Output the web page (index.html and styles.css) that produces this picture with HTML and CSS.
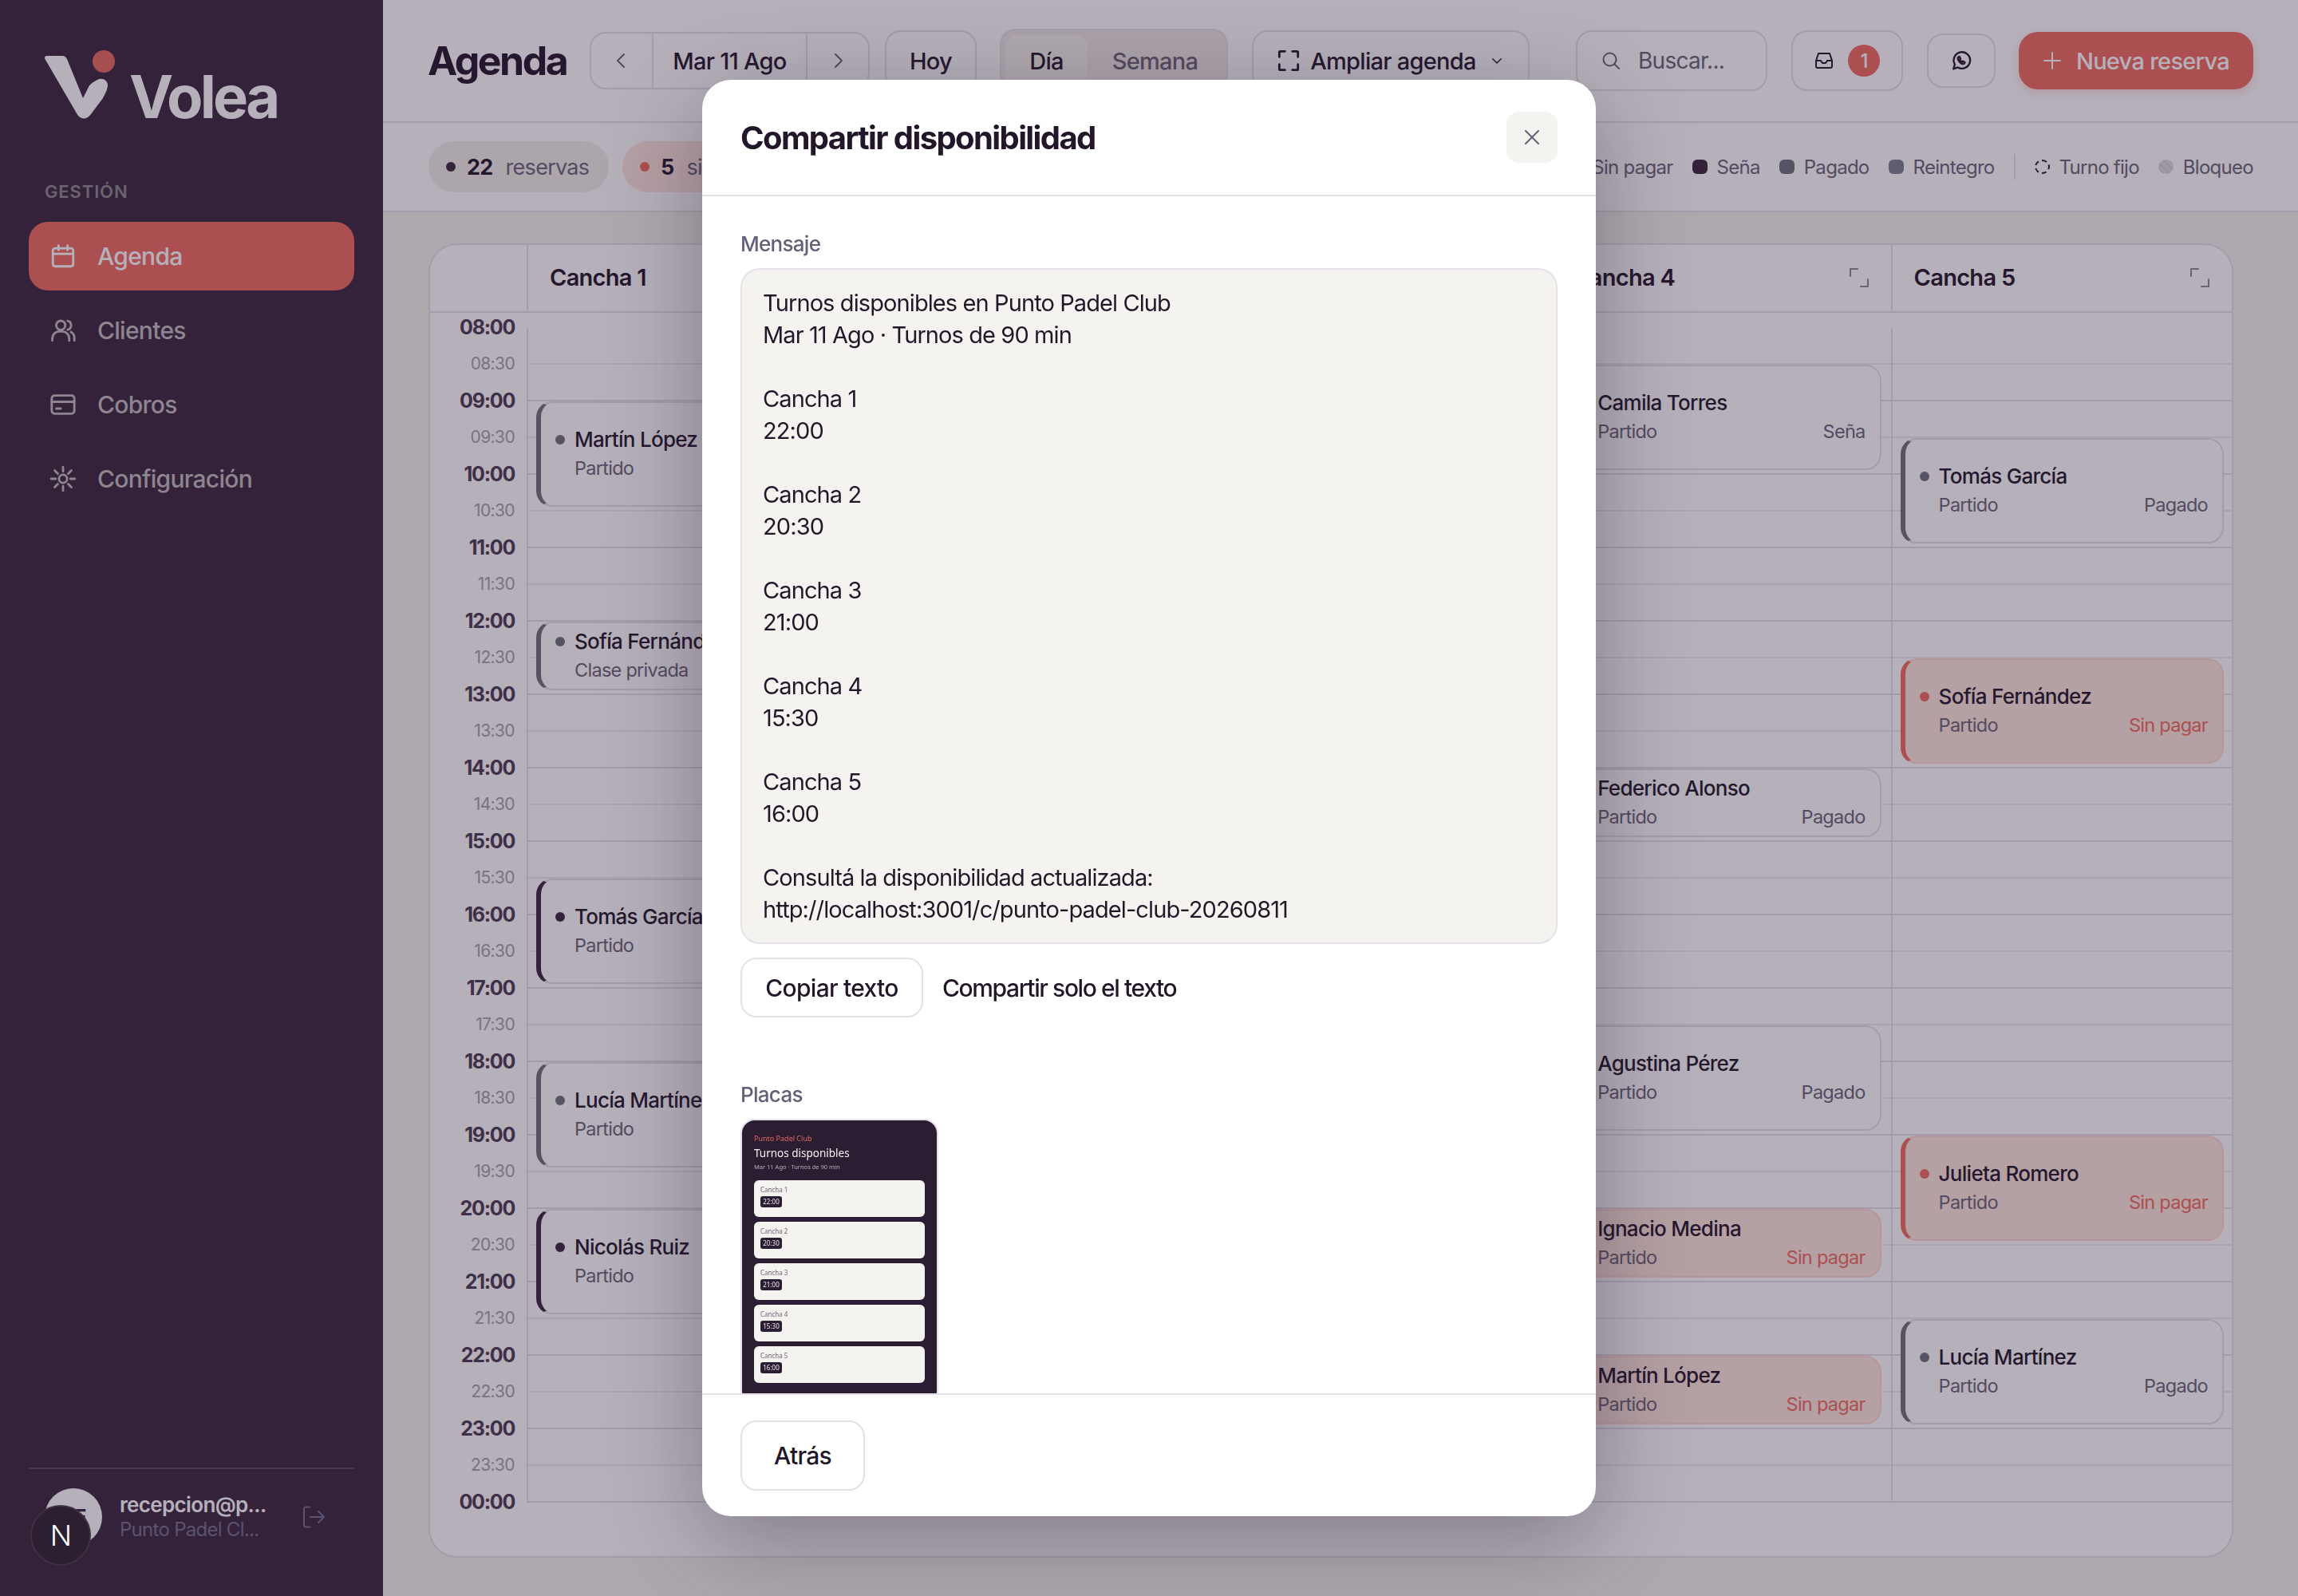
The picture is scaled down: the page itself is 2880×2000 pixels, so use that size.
FILE: index.html
```html
<!DOCTYPE html>
<html lang="es">

<head>
    <meta charset="UTF-8">
    <meta name="viewport" content="width=device-width, initial-scale=1.0">
    <title>Volea - Agenda</title>
    <link rel="stylesheet" href="styles.css">
</head>

<body>
    <div class="app">
        <aside class="sidebar">
            <div class="logo">
                <svg class="logo-mark" width="90" height="90" viewBox="0 0 90 90">
                    <path d="M3 12 C1 9 2 7 6 7 L24 7 C27 7 29 9 30 11 L50 60 L57 46 C60 41 63 40 68 37 C74 34 80 37 81 43 C81 49 78 54 75 60 L60 80 C54 88 46 87 42 79 Z" fill="#ffffff"/>
                    <circle cx="76" cy="14" r="14" fill="#ea6a5c"/>
                </svg>
                <span class="logo-text">Volea</span>
            </div>

            <div class="nav-title">GESTIÓN</div>
            <nav class="nav">
                <a class="nav-item active">
                    <svg class="icon" viewBox="0 0 24 24"><rect x="3" y="5" width="18" height="16" rx="2"/><path d="M8 2.5v4M16 2.5v4M3 10h18"/></svg>
                    Agenda
                </a>
                <a class="nav-item">
                    <svg class="icon" viewBox="0 0 24 24"><circle cx="10" cy="7.5" r="4"/><path d="M2.5 21v-2a6 6 0 0 1 6-6h3a6 6 0 0 1 6 6v2M16 3.6a4 4 0 0 1 0 7.8M19 13.4a6 6 0 0 1 3 5.6v2"/></svg>
                    Clientes
                </a>
                <a class="nav-item">
                    <svg class="icon" viewBox="0 0 24 24"><rect x="2" y="4" width="20" height="16" rx="2.5"/><path d="M2 9.5h20M6 15.5h4"/></svg>
                    Cobros
                </a>
                <a class="nav-item">
                    <svg class="icon" viewBox="0 0 24 24"><circle cx="12" cy="12" r="3.6"/><path d="M12 1.5v4M12 18.5v4M1.5 12h4M18.5 12h4M4.6 4.6l2.8 2.8M16.6 16.6l2.8 2.8M4.6 19.4l2.8-2.8M16.6 7.4l2.8-2.8"/></svg>
                    Configuración
                </a>
            </nav>

            <div class="user">
                <div class="avatar">RE</div>
                <div class="user-info">
                    <div class="user-mail">recepcion@p...</div>
                    <div class="user-club">Punto Padel Cl...</div>
                </div>
                <svg class="logout" viewBox="0 0 28 28"><path d="M9 1.5H4.5A2.5 2.5 0 0 0 2 4v20a2.5 2.5 0 0 0 2.5 2.5H9M10 14h17M20 7l7 7-7 7"/></svg>
            </div>
        </aside>

        <main class="main">
            <header class="topbar">
                <h1>Agenda</h1>
                <div class="date-nav">
                    <button class="date-arrow"><svg class="icon-sm" viewBox="0 0 24 24"><path d="M15 4l-8 8 8 8"/></svg></button>
                    <span class="date-label">Mar 11 Ago</span>
                    <button class="date-arrow"><svg class="icon-sm" viewBox="0 0 24 24"><path d="M9 4l8 8-8 8"/></svg></button>
                </div>
                <button class="btn today">Hoy</button>
                <div class="view-switch">
                    <span class="view-tab active">Día</span>
                    <span class="view-tab">Semana</span>
                </div>
                <button class="btn expand">
                    <svg class="expand-icon" viewBox="0 0 24 24"><path d="M8 2H3a1 1 0 0 0-1 1v5M16 2h5a1 1 0 0 1 1 1v5M8 22H3a1 1 0 0 1-1-1v-5M16 22h5a1 1 0 0 0 1-1v-5"/></svg>
                    Ampliar agenda
                    <svg class="chevron" viewBox="0 0 24 24"><path d="M5 9l7 7 7-7"/></svg>
                </button>
                <div class="search">
                    <svg class="icon-sm" viewBox="0 0 24 24"><circle cx="10.5" cy="10.5" r="8"/><path d="M16.5 16.5L22 22"/></svg>
                    Buscar...
                </div>
                <button class="btn inbox">
                    <svg class="icon-sm" viewBox="0 0 24 24"><path d="M5 3h14l3 9v7a2 2 0 0 1-2 2H4a2 2 0 0 1-2-2v-7zM2 12h6l2 3h4l2-3h6"/></svg>
                    <span class="badge">1</span>
                </button>
                <button class="btn whatsapp">
                    <svg class="wa-icon" viewBox="0 0 24 24"><path d="M3 21.5l1.5-5.2A9.5 9.5 0 1 1 8 19.8z"/><path d="M9 7.5c-1.5 1-1.3 3 .5 5.3 2 2.4 4.3 3.5 5.8 2.6l.9-1.4-2.4-1.4-1 .8c-1-.4-2-1.5-2.5-2.5l.8-1-1.2-2.5z"/></svg>
                </button>
                <button class="btn-primary">
                    <svg class="icon-sm" viewBox="0 0 24 24"><path d="M12 2v20M2 12h20"/></svg>
                    Nueva reserva
                </button>
            </header>

            <div class="filters">
                <div class="chip"><span class="dot dark"></span><b>22</b> reservas</div>
                <div class="chip chip-red"><span class="dot red"></span><b>5</b> sin pagar</div>
                <div class="legend">
                    <span class="legend-item"><span class="swatch red"></span>Sin pagar</span>
                    <span class="legend-item"><span class="swatch dark"></span>Seña</span>
                    <span class="legend-item"><span class="swatch grey"></span>Pagado</span>
                    <span class="legend-item"><span class="swatch slate"></span>Reintegro</span>
                    <span class="legend-sep"></span>
                    <span class="legend-item"><span class="swatch dashed"></span>Turno fijo</span>
                    <span class="legend-item"><span class="swatch blocked"></span>Bloqueo</span>
                </div>
            </div>

            <div class="content">
                <section class="agenda">
                    <div class="agenda-head">
                        <div class="head-time"></div>
                        <div class="head-court">Cancha 1 <svg class="court-expand" viewBox="0 0 24 24"><path d="M1 10V1h9M23 14v9h-9"/></svg></div>
                        <div class="head-court">Cancha 2 <svg class="court-expand" viewBox="0 0 24 24"><path d="M1 10V1h9M23 14v9h-9"/></svg></div>
                        <div class="head-court">Cancha 3 <svg class="court-expand" viewBox="0 0 24 24"><path d="M1 10V1h9M23 14v9h-9"/></svg></div>
                        <div class="head-court">Cancha 4 <svg class="court-expand" viewBox="0 0 24 24"><path d="M1 10V1h9M23 14v9h-9"/></svg></div>
                        <div class="head-court">Cancha 5 <svg class="court-expand" viewBox="0 0 24 24"><path d="M1 10V1h9M23 14v9h-9"/></svg></div>
                    </div>
                    <div class="agenda-body">
                        <div class="times">
                            <span class="hour">08:00</span><span>08:30</span>
                            <span class="hour">09:00</span><span>09:30</span>
                            <span class="hour">10:00</span><span>10:30</span>
                            <span class="hour">11:00</span><span>11:30</span>
                            <span class="hour">12:00</span><span>12:30</span>
                            <span class="hour">13:00</span><span>13:30</span>
                            <span class="hour">14:00</span><span>14:30</span>
                            <span class="hour">15:00</span><span>15:30</span>
                            <span class="hour">16:00</span><span>16:30</span>
                            <span class="hour">17:00</span><span>17:30</span>
                            <span class="hour">18:00</span><span>18:30</span>
                            <span class="hour">19:00</span><span>19:30</span>
                            <span class="hour">20:00</span><span>20:30</span>
                            <span class="hour">21:00</span><span>21:30</span>
                            <span class="hour">22:00</span><span>22:30</span>
                            <span class="hour">23:00</span><span>23:30</span>
                            <span class="hour">00:00</span>
                        </div>

                        <!-- grid-row: each row is half an hour from 08:00 -->
                        <div class="court">
                            <div class="event paid" style="grid-row: 3 / span 3">
                                <div class="event-name"><span class="dot"></span>Martín López</div>
                                <div class="event-meta"><span>Partido</span></div>
                            </div>
                            <div class="event paid" style="grid-row: 9 / span 2">
                                <div class="event-name"><span class="dot"></span>Sofía Fernández</div>
                                <div class="event-meta"><span>Clase privada</span></div>
                            </div>
                            <div class="event deposit" style="grid-row: 16 / span 3">
                                <div class="event-name"><span class="dot"></span>Tomás García</div>
                                <div class="event-meta"><span>Partido</span></div>
                            </div>
                            <div class="event paid" style="grid-row: 21 / span 3">
                                <div class="event-name"><span class="dot"></span>Lucía Martínez</div>
                                <div class="event-meta"><span>Partido</span></div>
                            </div>
                            <div class="event deposit" style="grid-row: 25 / span 3">
                                <div class="event-name"><span class="dot"></span>Nicolás Ruiz</div>
                                <div class="event-meta"><span>Partido</span></div>
                            </div>
                        </div>
                        <div class="court"></div>
                        <div class="court"></div>
                        <div class="court">
                            <div class="event deposit" style="grid-row: 2 / span 3">
                                <div class="event-name"><span class="dot"></span>Camila Torres</div>
                                <div class="event-meta"><span>Partido</span><span class="event-status">Seña</span></div>
                            </div>
                            <div class="event paid" style="grid-row: 13 / span 2">
                                <div class="event-name"><span class="dot"></span>Federico Alonso</div>
                                <div class="event-meta"><span>Partido</span><span class="event-status">Pagado</span></div>
                            </div>
                            <div class="event paid" style="grid-row: 20 / span 3">
                                <div class="event-name"><span class="dot"></span>Agustina Pérez</div>
                                <div class="event-meta"><span>Partido</span><span class="event-status">Pagado</span></div>
                            </div>
                            <div class="event unpaid" style="grid-row: 25 / span 2">
                                <div class="event-name"><span class="dot"></span>Ignacio Medina</div>
                                <div class="event-meta"><span>Partido</span><span class="event-status">Sin pagar</span></div>
                            </div>
                            <div class="event unpaid" style="grid-row: 29 / span 2">
                                <div class="event-name"><span class="dot"></span>Martín López</div>
                                <div class="event-meta"><span>Partido</span><span class="event-status">Sin pagar</span></div>
                            </div>
                        </div>
                        <div class="court">
                            <div class="event paid" style="grid-row: 4 / span 3">
                                <div class="event-name"><span class="dot"></span>Tomás García</div>
                                <div class="event-meta"><span>Partido</span><span class="event-status">Pagado</span></div>
                            </div>
                            <div class="event unpaid" style="grid-row: 10 / span 3">
                                <div class="event-name"><span class="dot"></span>Sofía Fernández</div>
                                <div class="event-meta"><span>Partido</span><span class="event-status">Sin pagar</span></div>
                            </div>
                            <div class="event unpaid" style="grid-row: 23 / span 3">
                                <div class="event-name"><span class="dot"></span>Julieta Romero</div>
                                <div class="event-meta"><span>Partido</span><span class="event-status">Sin pagar</span></div>
                            </div>
                            <div class="event paid" style="grid-row: 28 / span 3">
                                <div class="event-name"><span class="dot"></span>Lucía Martínez</div>
                                <div class="event-meta"><span>Partido</span><span class="event-status">Pagado</span></div>
                            </div>
                        </div>
                    </div>
                </section>
            </div>
        </main>
    </div>

    <div class="overlay">
        <div class="modal">
            <div class="modal-head">
                <h2>Compartir disponibilidad</h2>
                <button class="modal-close"><svg class="icon-sm" viewBox="0 0 24 24"><path d="M4 4l16 16M20 4L4 20"/></svg></button>
            </div>
            <div class="modal-body">
                <div class="field-label">Mensaje</div>
                <div class="message">Turnos disponibles en Punto Padel Club
Mar 11 Ago · Turnos de 90 min

Cancha 1
22:00

Cancha 2
20:30

Cancha 3
21:00

Cancha 4
15:30

Cancha 5
16:00

Consultá la disponibilidad actualizada:
http://localhost:3001/c/punto-padel-club-20260811</div>
                <div class="message-actions">
                    <button class="btn-outline">Copiar texto</button>
                    <button class="btn-text">Compartir solo el texto</button>
                </div>

                <div class="field-label plates-label">Placas</div>
                <div class="plate">
                    <div class="plate-club">Punto Padel Club</div>
                    <div class="plate-title">Turnos disponibles</div>
                    <div class="plate-sub">Mar 11 Ago · Turnos de 90 min</div>
                    <div class="plate-card"><div>Cancha 1</div><span class="plate-time">22:00</span></div>
                    <div class="plate-card"><div>Cancha 2</div><span class="plate-time">20:30</span></div>
                    <div class="plate-card"><div>Cancha 3</div><span class="plate-time">21:00</span></div>
                    <div class="plate-card"><div>Cancha 4</div><span class="plate-time">15:30</span></div>
                    <div class="plate-card"><div>Cancha 5</div><span class="plate-time">16:00</span></div>
                </div>
            </div>
            <div class="modal-foot">
                <button class="btn-outline back">Atrás</button>
            </div>
        </div>
    </div>

    <div class="dev-badge">N</div>
</body>

</html>
```

FILE: styles.css
```css
* {
    box-sizing: border-box;
}

body {
    margin: 0;
    font-family: Inter, "Noto Sans", sans-serif;
    color: #231629;
    background-color: #f6f4ee;
    letter-spacing: -0.045em;
}

button {
    font: inherit;
    letter-spacing: inherit;
    color: inherit;
    background: none;
    border: none;
    padding: 0;
}

svg {
    flex: none;
    fill: none;
    stroke: currentColor;
    stroke-width: 2;
    stroke-linecap: round;
    stroke-linejoin: round;
}

.app {
    display: flex;
    height: 2000px;
    overflow: hidden;
}

/* Sidebar */
.sidebar {
    width: 480px;
    flex: none;
    display: flex;
    flex-direction: column;
    background-color: #3a263c;
    padding: 0 36px;
}

.logo {
    display: flex;
    align-items: flex-end;
    height: 155px;
    padding-left: 18px;
    gap: 24px;
}

.logo-mark {
    stroke: none;
    margin-top: auto;
    margin-bottom: 2px;
}

.logo-text {
    font-size: 74px;
    line-height: 72px;
    font-weight: 700;
    color: #fff;
    letter-spacing: -0.05em;
    margin: 0 0 -2px -6px;
}

.nav-title {
    margin-top: 72px;
    padding-left: 20px;
    font-size: 22px;
    line-height: 26px;
    font-weight: 600;
    letter-spacing: 0.04em;
    color: #8d8a8e;
}

.nav {
    display: flex;
    flex-direction: column;
    gap: 7px;
    margin-top: 25px;
}

.nav-item {
    display: flex;
    align-items: center;
    gap: 26px;
    height: 86px;
    padding-left: 26px;
    border-radius: 24px;
    font-size: 30px;
    font-weight: 500;
    color: #c2bebf;
}

.nav-item.active {
    background-color: #f26a5c;
    color: #fff;
}

.icon {
    width: 34px;
    height: 34px;
}

.user {
    display: flex;
    align-items: center;
    margin-top: auto;
    height: 161px;
    padding: 0 37px 40px 20px;
    border-top: 2px solid #5a4550;
}

.avatar {
    width: 72px;
    height: 72px;
    flex: none;
    display: flex;
    align-items: center;
    justify-content: center;
    border-radius: 50%;
    background-color: #fff;
    color: #3a263c;
    font-size: 26px;
    font-weight: 700;
}

.user-info {
    flex: 1;
    margin-left: 22px;
}

.user-mail {
    font-size: 26px;
    line-height: 32px;
    font-weight: 600;
    letter-spacing: -0.025em;
    color: #fff;
}

.user-club {
    font-size: 24px;
    line-height: 30px;
    color: #73708f;
}

.logout {
    width: 28px;
    height: 28px;
    color: #73708f;
}

/* Top bar */
.main {
    flex: 1;
    display: flex;
    flex-direction: column;
    min-width: 0;
}

.topbar {
    display: flex;
    align-items: center;
    height: 154px;
    padding: 0 56px 0 57px;
    border-bottom: 2px solid #e5e1e6;
    background-color: #fff;
}

.topbar h1 {
    margin: 0 30px 0 -1px;
    font-size: 50px;
    font-weight: 700;
    letter-spacing: -0.05em;
    width: 173px;
    white-space: nowrap;
}

.date-nav {
    display: flex;
    align-items: center;
    width: 351px;
    height: 72px;
    border: 2px solid #e5e1e6;
    border-radius: 20px;
    margin-right: 19px;
}

.date-arrow {
    width: 76px;
    height: 100%;
    display: flex;
    align-items: center;
    justify-content: center;
    color: #6b6475;
}

.date-label {
    flex: 1;
    height: 100%;
    display: flex;
    align-items: center;
    justify-content: center;
    border-left: 2px solid #e5e1e6;
    border-right: 2px solid #e5e1e6;
    font-size: 29px;
    font-weight: 500;
}

.icon-sm {
    width: 24px;
    height: 24px;
}

.btn {
    display: flex;
    align-items: center;
    justify-content: center;
    height: 76px;
    border: 2px solid #e5e1e6;
    border-radius: 20px;
    font-size: 29px;
    font-weight: 500;
}

.today {
    width: 115px;
    margin-right: 29px;
}

.view-switch {
    display: flex;
    width: 286px;
    height: 80px;
    padding: 6px 5px;
    border: 2px solid #e5e1e6;
    border-radius: 20px;
    background-color: #f0e9e6;
    margin-right: 30px;
}

.view-tab {
    flex: 1;
    display: flex;
    align-items: center;
    justify-content: center;
    border-radius: 16px;
    font-size: 29px;
    font-weight: 500;
    color: #6b6475;
}

.view-tab.active {
    flex: none;
    width: 103px;
    background-color: #f6f4ee;
    color: #231629;
}

.expand {
    width: 348px;
    gap: 13px;
}

.expand-icon {
    width: 28px;
    height: 28px;
    stroke-width: 2.4;
}

.chevron {
    width: 18px;
    height: 18px;
    margin-left: 4px;
}

.search {
    display: flex;
    align-items: center;
    gap: 22px;
    width: 240px;
    height: 76px;
    padding-left: 30px;
    margin-left: auto;
    border: 2px solid #e5e1e6;
    border-radius: 20px;
    font-size: 28px;
    color: #6b6475;
}

.inbox {
    width: 140px;
    margin-left: 30px;
    gap: 18px;
}

.badge {
    width: 40px;
    height: 40px;
    display: flex;
    align-items: center;
    justify-content: center;
    border-radius: 50%;
    background-color: #f26a5c;
    color: #fff;
    font-size: 24px;
    font-weight: 500;
}

.whatsapp {
    width: 86px;
    height: 68px;
    margin-left: 30px;
}

.wa-icon {
    width: 26px;
    height: 26px;
    stroke-width: 2.2;
}

.btn-primary {
    display: flex;
    align-items: center;
    justify-content: center;
    gap: 18px;
    width: 294px;
    height: 72px;
    margin-left: 29px;
    border-radius: 24px;
    background-color: #f26a5c;
    color: #fff;
    font-size: 29px;
    font-weight: 500;
    box-shadow: 0 4px 12px rgba(242, 106, 92, 0.25);
}

/* Filters */
.filters {
    display: flex;
    align-items: center;
    gap: 17px;
    height: 112px;
    padding: 0 56px 0 57px;
    border-bottom: 2px solid #e5e1e6;
    background-color: #fff;
}

.chip {
    display: flex;
    align-items: center;
    gap: 14px;
    width: 226px;
    height: 64px;
    padding-left: 22px;
    border-radius: 32px;
    background-color: #f1efe9;
    font-size: 27px;
    color: #6b6475;
}

.chip b {
    font-weight: 700;
    color: #231629;
    margin-right: 2px;
}

.chip-red {
    width: 240px;
    background-color: #ffe6de;
}

.dot {
    width: 12px;
    height: 12px;
    flex: none;
    border-radius: 50%;
}

.dot.dark {
    background-color: #3a263c;
}

.dot.red {
    background-color: #f26a5c;
}

.legend {
    display: flex;
    align-items: center;
    gap: 24px;
    margin-left: auto;
    font-size: 24px;
    color: #6b6475;
}

.legend-item {
    display: flex;
    align-items: center;
    gap: 12px;
}

.swatch {
    width: 19px;
    height: 18px;
    border-radius: 6px;
}

.swatch.red {
    background-color: #f26a5c;
}

.swatch.dark {
    background-color: #3a263c;
}

.swatch.grey {
    background-color: #6d7278;
}

.swatch.slate {
    background-color: #7d7f90;
}

.swatch.dashed {
    border: 2px dashed #231629;
    border-radius: 50%;
}

.swatch.blocked {
    background: repeating-linear-gradient(45deg, #e2dfe2 0 3px, #d4d1d5 3px 6px);
    border-radius: 50%;
}

.legend-sep {
    width: 2px;
    height: 32px;
    background-color: #e5e1e6;
}

/* Agenda grid */
.content {
    flex: 1;
    display: flex;
    padding: 39px 81px 48px 57px;
}

.agenda {
    flex: 1;
    display: flex;
    flex-direction: column;
    background-color: #fff;
    border: 2px solid #e5e1e6;
    border-radius: 36px;
}

.agenda-head,
.agenda-body {
    display: grid;
    grid-template-columns: 121px repeat(5, 1fr);
}

.agenda-head {
    height: 85px;
    border-bottom: 2px solid #e5e1e6;
}

.agenda-body {
    align-items: start;
    padding-top: 19px;
}

.head-court {
    display: flex;
    align-items: center;
    justify-content: space-between;
    padding: 0 28px 2px 27px;
    border-left: 2px solid #e5e1e6;
    font-size: 29px;
    font-weight: 600;
}

.court-expand {
    width: 24px;
    height: 24px;
    color: #8d8a8e;
}

.times {
    display: flex;
    flex-direction: column;
    margin-top: -24px;
    padding-right: 15px;
    text-align: right;
    font-size: 21px;
    letter-spacing: -0.03em;
    color: #a6a1a8;
}

.times span {
    height: 46px;
    line-height: 46px;
}

.times .hour {
    font-size: 25px;
    font-weight: 700;
    letter-spacing: -0.05em;
    color: #4a3a50;
}

.court {
    display: grid;
    grid-template-rows: repeat(32, 46px);
    border-left: 2px solid #e5e1e6;
    background-image: repeating-linear-gradient(to bottom,
            transparent 0 44px,
            #efecef 44px 46px,
            transparent 46px 90px,
            #e5e1e6 90px 92px);
}

.event {
    display: flex;
    flex-direction: column;
    justify-content: center;
    gap: 6px;
    margin: 0 12px 6px 10px;
    padding: 0 18px 1px;
    border: 2px solid #e5e1e6;
    border-left-width: 6px;
    border-radius: 20px;
    background-color: #fff;
}

.court:last-child .event {
    margin-right: 10px;
}

.event .dot {
    margin-right: 12px;
}

.event-name {
    display: flex;
    align-items: center;
    font-size: 26px;
    line-height: 30px;
    font-weight: 500;
    white-space: nowrap;
}

.event-meta {
    display: flex;
    justify-content: space-between;
    padding-left: 24px;
    font-size: 23.5px;
    line-height: 29px;
    color: #6b6475;
}

.paid {
    border-left-color: #6d7278;
}

.paid .dot {
    background-color: #6d7278;
}

.deposit {
    border-left-color: #3a263c;
}

.deposit .dot {
    background-color: #3a263c;
}

.unpaid {
    background-color: #ffe6dc;
    border-color: #ffd9d0;
    border-left-color: #f26a5c;
}

.unpaid .dot {
    background-color: #f26a5c;
}

.unpaid .event-status {
    color: #f26a5c;
}

/* Modal */
.overlay {
    position: fixed;
    inset: 0;
    display: flex;
    align-items: center;
    justify-content: center;
    background-color: rgba(44, 30, 56, 0.35);
}

.modal {
    display: flex;
    flex-direction: column;
    width: 1120px;
    height: 1800px;
    border-radius: 36px;
    background-color: #fff;
    box-shadow: 0 30px 120px rgba(35, 22, 41, 0.35);
}

.modal-head {
    display: flex;
    align-items: center;
    justify-content: space-between;
    flex: none;
    height: 146px;
    padding: 0 48px;
    border-bottom: 2px solid #e5e1e6;
}

.modal-head h2 {
    margin: 0;
    font-size: 40px;
    font-weight: 700;
    letter-spacing: -0.04em;
}

.modal-close {
    width: 64px;
    height: 64px;
    display: flex;
    align-items: center;
    justify-content: center;
    border-radius: 16px;
    background-color: #f5f3f0;
    color: #64607a;
}

.modal-body {
    flex: 1;
    min-height: 0;
    overflow: hidden;
    padding: 44px 48px 0;
}

.field-label {
    font-size: 26px;
    line-height: 32px;
    font-weight: 500;
    color: #64607a;
    margin-bottom: 14px;
}

.message {
    height: 847px;
    padding: 22px 26px;
    border: 2px solid #e5e1e6;
    border-radius: 24px;
    background-color: #f5f3f0;
    font-size: 29px;
    line-height: 40px;
    letter-spacing: -0.9px;
    white-space: pre-line;
}

.message-actions {
    display: flex;
    align-items: center;
    gap: 24px;
    margin-top: 17px;
}

.btn-outline {
    height: 75px;
    width: 229px;
    border: 2px solid #e5e1e6;
    border-radius: 20px;
    background-color: #fff;
    font-size: 30px;
    font-weight: 500;
}

.btn-text {
    font-size: 30px;
    font-weight: 500;
    letter-spacing: -1.4px;
}

.plates-label {
    margin-top: 81px;
    margin-bottom: 14px;
}

.plate {
    width: 248px;
    padding: 16px 15px 20px;
    border: 2px solid #e5e1e6;
    border-radius: 18px;
    background-color: #2b1e33;
    font-family: "Noto Sans", sans-serif;
    letter-spacing: 0;
}

.plate-club {
    font-size: 9px;
    line-height: 13px;
    color: #e0685a;
}

.plate-title {
    margin-top: 2px;
    font-size: 13.5px;
    line-height: 20px;
    color: #f5f3f0;
}

.plate-sub {
    font-size: 7.5px;
    line-height: 14px;
    color: #b6afba;
    margin-bottom: 10px;
}

.plate-card {
    height: 46px;
    margin-bottom: 6px;
    padding: 6px 8px;
    border-radius: 6px;
    background-color: #f5f3f0;
    font-size: 8px;
    line-height: 12px;
    color: #6b6475;
}

.plate-time {
    display: block;
    width: 27px;
    height: 14px;
    margin-top: 2px;
    border-radius: 3px;
    background-color: #2b1e33;
    color: #e9e6ea;
    line-height: 14px;
    text-align: center;
}

.modal-foot {
    flex: none;
    height: 154px;
    padding: 32px 48px 0;
    border-top: 2px solid #e5e1e6;
}

.back {
    width: 156px;
    height: 88px;
}

/* Framework dev badge */
.dev-badge {
    position: fixed;
    left: 38px;
    top: 1886px;
    width: 76px;
    height: 76px;
    display: flex;
    align-items: center;
    justify-content: center;
    border: 2px solid #3f3042;
    border-radius: 50%;
    background-color: #2c1f31;
    color: #fff;
    font-size: 36px;
    font-weight: 300;
}
```
